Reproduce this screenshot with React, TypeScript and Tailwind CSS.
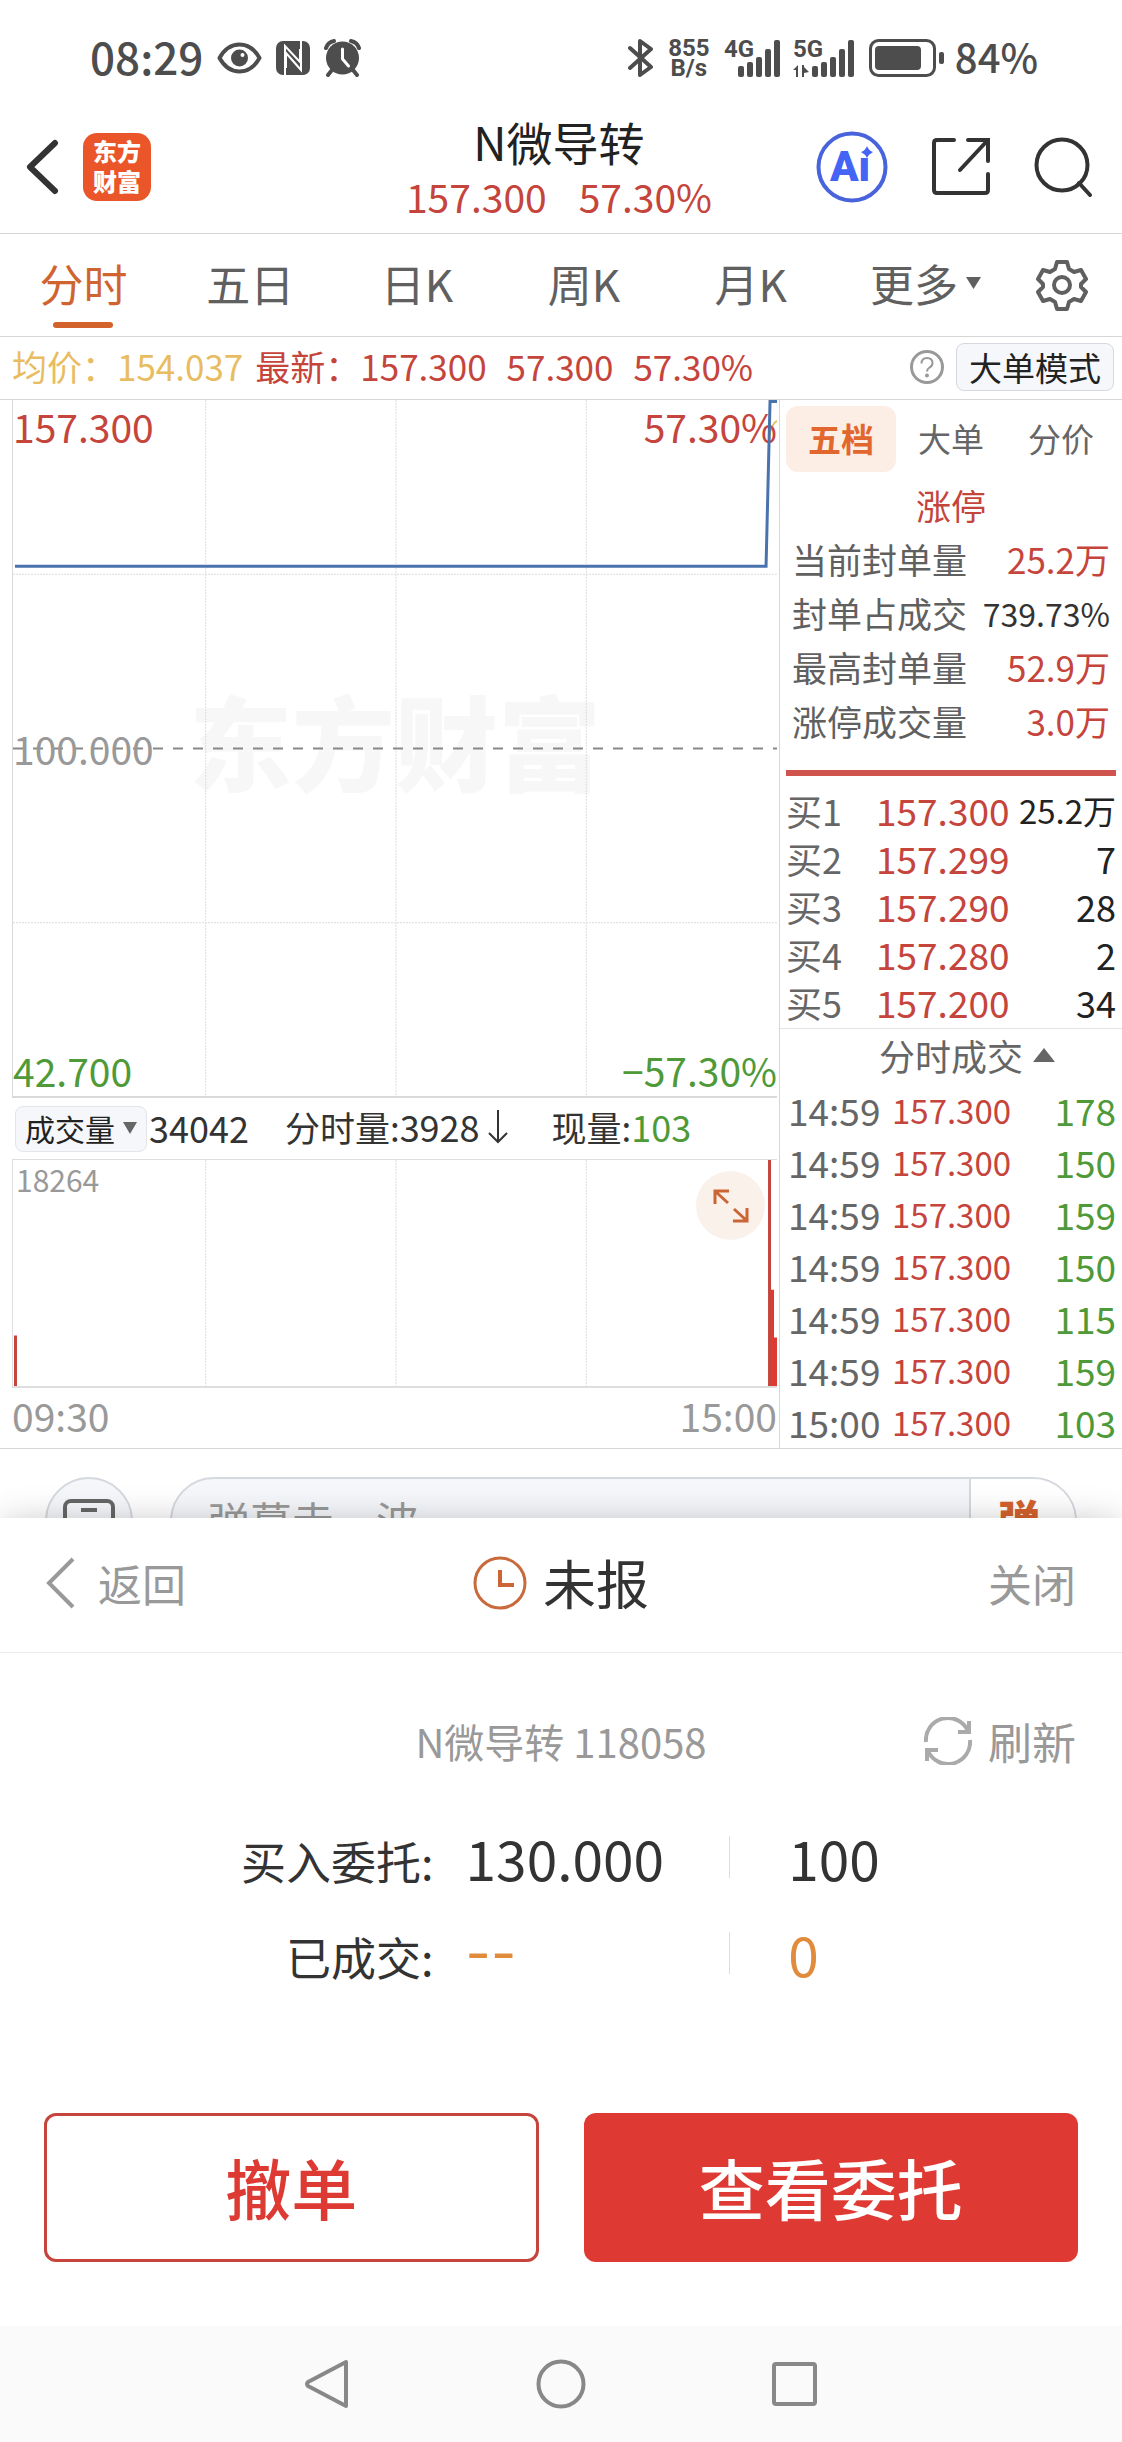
const tabs = ["分时", "五日", "日K", "周K", "月K"];

const sealStats = [
  { label: "当前封单量", value: "25.2万", red: true },
  { label: "封单占成交", value: "739.73%", red: false },
  { label: "最高封单量", value: "52.9万", red: true },
  { label: "涨停成交量", value: "3.0万", red: true },
];

const bids = [
  { level: "买1", price: "157.300", amount: "25.2万" },
  { level: "买2", price: "157.299", amount: "7" },
  { level: "买3", price: "157.290", amount: "28" },
  { level: "买4", price: "157.280", amount: "2" },
  { level: "买5", price: "157.200", amount: "34" },
];

const ticks = [
  { time: "14:59", price: "157.300", amount: "178" },
  { time: "14:59", price: "157.300", amount: "150" },
  { time: "14:59", price: "157.300", amount: "159" },
  { time: "14:59", price: "157.300", amount: "150" },
  { time: "14:59", price: "157.300", amount: "115" },
  { time: "14:59", price: "157.300", amount: "159" },
  { time: "15:00", price: "157.300", amount: "103" },
];

const signalHeights = [11, 15, 20, 28, 37];

const Signal = ({ label, arrows }: { label: string; arrows?: boolean }) => (
  <svg
    className="overflow-visible"
    width={arrows ? 61 : 56}
    height="38"
    viewBox={arrows ? "0 0 61 38" : "0 0 56 38"}
    fill="#4d4d4d"
    aria-hidden="true"
  >
    <text x="0" y="18" fontSize="24" fontWeight="700" fontFamily="Roboto, sans-serif">
      {label}
    </text>
    {arrows && <path d="M5 26v12H3v-7H0zM9 26h2v2l5 5-5 1v4H9z" />}
    {signalHeights.map((h, i) => (
      <rect key={h} x={(arrows ? 19 : 14) + i * 9} y={38 - h} width="6" height={h} rx="2" />
    ))}
  </svg>
);

const StatusBar = () => (
  <div className="flex h-[116px] items-center justify-between pr-[84px] pl-[90px] text-[#4d4d4d]">
    <div className="flex items-center gap-[14px]">
      <span className="pb-1 text-[44px] leading-none font-medium">08:29</span>
      <svg width="45" height="32" viewBox="0 0 45 32" aria-hidden="true">
        <path
          d="M2.500 16Q10 2.500 22.500 2.500T42.500 16Q35 29.500 22.500 29.500T2.500 16z"
          fill="none"
          stroke="#4d4d4d"
          strokeWidth="4"
          strokeLinejoin="round"
        />
        <circle cx="22.500" cy="16" r="8.500" fill="#4d4d4d" />
        <circle cx="25.500" cy="13" r="2" fill="#fff" />
      </svg>
      <svg width="34" height="34" viewBox="0 0 34 34" aria-hidden="true">
        <rect width="34" height="34" rx="7" fill="#4d4d4d" />
        <path d="M9 34V5L24 21V8M10 27V12L25 29V0" fill="none" stroke="#fff" strokeWidth="2" />
      </svg>
      <svg width="37" height="38" viewBox="0 0 37 38" aria-hidden="true">
        <g fill="none" stroke="#4d4d4d" strokeWidth="4" strokeLinecap="round">
          <path d="M2 9Q4 3 10 2M35 9Q33 3 27 2M8 31l-4 5M29 31l4 5" />
        </g>
        <circle cx="18.500" cy="19" r="16.500" fill="#4d4d4d" />
        <path
          d="M18.500 10v10l6 7"
          fill="none"
          stroke="#fff"
          strokeWidth="3"
          strokeLinecap="round"
        />
      </svg>
    </div>
    <div className="flex items-center gap-[13px]">
      <svg width="26" height="38" viewBox="0 0 26 38" aria-hidden="true">
        <path
          d="M2 9l21 19-11 8V2l11 8L2 29"
          fill="none"
          stroke="#4d4d4d"
          strokeWidth="4"
          strokeLinejoin="round"
          strokeLinecap="round"
        />
      </svg>
      <span className="flex w-[44px] flex-col items-center font-[Roboto,sans-serif] text-[24px] leading-[20px] font-bold">
        <span>855</span>
        <span>B/s</span>
      </span>
      <Signal label="4G" />
      <Signal label="5G" arrows />
      <div className="flex items-center gap-[10px] pl-[2px]">
        <svg width="76" height="38" viewBox="0 0 76 38" aria-hidden="true">
          <rect
            x="1.500"
            y="1.500"
            width="64"
            height="35"
            rx="8"
            fill="none"
            stroke="#4d4d4d"
            strokeWidth="3"
          />
          <rect x="6" y="7" width="46" height="24" rx="4" fill="#4d4d4d" />
          <rect x="70" y="13" width="5" height="12" rx="2" fill="#4d4d4d" />
        </svg>
        <span className="pb-1 text-[40px] leading-none font-medium">84%</span>
      </div>
    </div>
  </div>
);

const Header = () => (
  <header className="grid h-[118px] grid-cols-[1fr_auto_1fr] items-start border-b border-[#d6d6d6] pr-[30px] pl-[26px]">
    <div className="flex h-[102px] items-center gap-6">
      <button aria-label="返回上一页">
        <svg width="33" height="56" viewBox="0 0 33 56" aria-hidden="true">
          <path
            d="M29 4L4 28l25 24"
            fill="none"
            stroke="#333"
            strokeWidth="6"
            strokeLinecap="round"
            strokeLinejoin="round"
          />
        </svg>
      </button>
      <a
        href="#home"
        className="flex h-[68px] w-[68px] flex-col items-center justify-center rounded-[14px] bg-[#ea5529] pb-[2px] text-[24px] leading-[30px] font-black text-white"
      >
        <span>东方</span>
        <span>财富</span>
      </a>
    </div>
    <div className="flex flex-col items-center">
      <h1 className="text-[46px] leading-[50px] text-[#222]">N微导转</h1>
      <p className="flex gap-8 text-[39px] leading-[60px] text-[#c5443c]">
        <span>157.300</span>
        <span>57.30%</span>
      </p>
    </div>
    <div className="flex h-[102px] items-center justify-end gap-[44px]">
      <button aria-label="AI 助手">
        <svg width="72" height="72" viewBox="0 0 72 72" aria-hidden="true">
          <circle cx="36" cy="36" r="33.500" fill="none" stroke="#4863dc" strokeWidth="4" />
          <text
            x="14"
            y="50"
            fontSize="42"
            fontWeight="900"
            fontFamily="Roboto, sans-serif"
            fill="#4464f5"
          >
            Ai
          </text>
          <rect x="42" y="15" width="17" height="12" fill="#fff" />
          <path d="M51 15q2 5 6 6-4 2-6 6-2-4-6-6 4-1 6-6z" fill="#4464f5" />
        </svg>
      </button>
      <button aria-label="分享">
        <svg width="58" height="58" viewBox="0 0 58 58" aria-hidden="true">
          <path
            d="M22 2H5Q2 2 2 5v47q0 3 3 3h48q3 0 3-3V36M36 2h20v21M55 3L28 32"
            fill="none"
            stroke="#333"
            strokeWidth="4"
            strokeLinecap="round"
          />
        </svg>
      </button>
      <button aria-label="搜索">
        <svg width="58" height="60" viewBox="0 0 58 60" aria-hidden="true">
          <circle cx="28" cy="28" r="25.500" fill="none" stroke="#333" strokeWidth="4" />
          <path d="M45 46l11 12" stroke="#333" strokeWidth="4" strokeLinecap="round" />
        </svg>
      </button>
    </div>
  </header>
);

const PeriodTabs = () => (
  <nav className="flex h-[103px] border-b border-[#d6d6d6] text-[44px] text-[#606060]">
    <div className="grid flex-1 grid-cols-6">
      {tabs.map((tab, i) => (
        <button
          key={tab}
          className={
            i === 0
              ? "relative flex items-center justify-center pb-1 text-[#cf6431]"
              : "flex items-center justify-center pb-1"
          }
        >
          {tab}
          {i === 0 && (
            <span className="absolute bottom-2 h-[6px] w-[60px] rounded-full bg-[#d4622d]" />
          )}
        </button>
      ))}
      <button className="flex items-center justify-center gap-2 pb-1 pl-4">
        更多
        <svg width="15" height="12" viewBox="0 0 15 12" aria-hidden="true">
          <path d="M0 0h15L7.500 12z" fill="#606060" />
        </svg>
      </button>
    </div>
    <button aria-label="设置" className="flex w-[121px] items-center justify-center">
      <svg width="52" height="52" viewBox="0 0 52 52" aria-hidden="true">
        <path
          d="M21 3h10l2 7 5 3 7-2 5 9-5 5v3l5 5-5 9-7-2-5 3-2 7H21l-2-7-5-3-7 2-5-9 5-5v-3l-5-5 5-9 7 2 5-3z"
          fill="none"
          stroke="#606060"
          strokeWidth="4"
          strokeLinejoin="round"
        />
        <circle cx="26" cy="26" r="8" fill="none" stroke="#606060" strokeWidth="4" />
      </svg>
    </button>
  </nav>
);

const QuoteLine = () => (
  <div className="flex h-[63px] items-center justify-between border-b border-[#d6d6d6] pr-2 pb-1 pl-3 text-[35px] whitespace-nowrap">
    <div className="flex gap-3 text-[#c5443c]">
      <span className="text-[#e8bd62]">均价：154.037</span>
      <span>最新：157.300</span>
      <span className="pl-2">57.300</span>
      <span className="pl-2">57.30%</span>
    </div>
    <div className="flex items-center gap-3 pt-[2px]">
      <button aria-label="说明">
        <svg width="34" height="34" viewBox="0 0 34 34" aria-hidden="true">
          <circle cx="17" cy="17" r="15.500" fill="none" stroke="#999" strokeWidth="3" />
          <path
            d="M11.500 13.500q0-5.500 5.500-5.500t5.500 5q0 3-3 4.500-2.500 1.500-2.500 4"
            fill="none"
            stroke="#999"
            strokeWidth="2"
          />
          <circle cx="17" cy="25.500" r="2" fill="#999" />
        </svg>
      </button>
      <button className="h-[48px] rounded-lg border border-[#d5d8de] bg-[#f5f7fa] px-3 text-[33px] leading-[44px] text-[#222]">
        大单模式
      </button>
    </div>
  </div>
);

const PriceChart = () => (
  <div className="relative h-[698px] border-b-2 border-l border-[#d9d9d9] text-[39px] leading-[52px]">
    <span className="absolute inset-x-0 top-[290px] text-center text-[103px] leading-[100px] font-black text-[#f7f7f7]">
      东方财富
    </span>
    <svg
      className="absolute inset-0 h-full w-full"
      viewBox="0 0 767 697"
      preserveAspectRatio="none"
      aria-hidden="true"
    >
      <path
        d="M193.500 0V697M384.500 0V697M575.500 0V697M0 174.500H767M0 523.500H767"
        stroke="#dcdcdc"
        strokeDasharray="2 1"
        vectorEffect="non-scaling-stroke"
      />
      <path
        d="M0 349H767"
        stroke="#888"
        strokeWidth="2"
        strokeDasharray="10 10"
        vectorEffect="non-scaling-stroke"
      />
      <path d="M759 38Q761 24 767 21" fill="none" stroke="#e8bd62" strokeWidth="2" />
    </svg>
    <span className="absolute top-0 left-0 text-[#c5443c]">157.300</span>
    <span className="absolute top-0 right-0 text-[#c5443c]">57.30%</span>
    <span className="absolute top-[322px] left-0 text-[#999]">100.000</span>
    <span className="absolute bottom-0 left-0 text-[#4f9a38]">42.700</span>
    <span className="absolute right-0 bottom-0 text-[#4f9a38]">−57.30%</span>
    <svg
      className="absolute inset-0 h-full w-full"
      viewBox="0 0 767 697"
      preserveAspectRatio="none"
      aria-hidden="true"
    >
      <path
        d="M2 166.500H756L760 1.500H767"
        fill="none"
        stroke="#4a72ad"
        strokeWidth="3"
        vectorEffect="non-scaling-stroke"
      />
    </svg>
  </div>
);

const VolumeChart = () => (
  <>
    <div className="flex h-[61px] items-center text-[35px] whitespace-nowrap text-[#333]">
      <button className="ml-[3px] flex h-[46px] w-[132px] items-center justify-center gap-2 rounded-lg border border-[#e2e5ea] bg-[#f5f7fa] pb-[2px] text-[30px] leading-none text-[#222]">
        成交量
        <svg width="14" height="12" viewBox="0 0 14 12" aria-hidden="true">
          <path d="M0 0h14L7 12z" fill="#666" />
        </svg>
      </button>
      <span className="ml-[2px] pb-1 text-[36px]">34042</span>
      <span className="ml-9 flex items-center gap-2 pb-1">
        <span>
          分时量:<span className="text-[36px]">3928</span>
        </span>
        <svg width="20" height="34" viewBox="0 0 20 34" aria-hidden="true">
          <path d="M10 0v32M1 23l9 9 9-9" fill="none" stroke="#333" strokeWidth="2" />
        </svg>
      </span>
      <span className="ml-[44px] pb-1">
        现量:<span className="text-[36px] text-[#4f9a38]">103</span>
      </span>
    </div>
    <div className="relative h-[229px] border-t border-b-2 border-l border-[#dedede]">
      <svg
        className="absolute inset-0 h-full w-full"
        viewBox="0 0 767 228"
        preserveAspectRatio="none"
        aria-hidden="true"
      >
        <path
          d="M193.500 0V228M384.500 0V228M575.500 0V228"
          stroke="#dcdcdc"
          strokeDasharray="2 1"
          vectorEffect="non-scaling-stroke"
        />
        <path d="M1 177h3v51H1zM758 0h3v228h-3z" fill="#c5443c" />
        <path d="M761 131h3v97h-3zM764 179h3v49h-3z" fill="#dc3a32" />
      </svg>
      <span className="absolute top-0 left-[3px] text-[30px] leading-[38px] text-[#999]">
        18264
      </span>
      <button
        aria-label="全屏"
        className="absolute top-[11px] right-3 flex h-[69px] w-[69px] items-center justify-center rounded-full bg-[#fbf1eb]"
      >
        <svg width="36" height="34" viewBox="0 0 36 34" aria-hidden="true">
          <path
            d="M2 15V2h14M3 3l12 11M34 19v13H20M33 31L21 20"
            fill="none"
            stroke="#cc6535"
            strokeWidth="3"
          />
        </svg>
      </button>
    </div>
    <div className="flex h-[59px] items-center justify-between pb-1 text-[39px] text-[#999]">
      <span>09:30</span>
      <span>15:00</span>
    </div>
  </>
);

const OrderPanel = () => (
  <aside className="w-[343px] shrink-0 border-l border-[#d6d6d6] whitespace-nowrap">
    <div className="px-[6px] pt-[6px]">
      <div className="grid h-[66px] grid-cols-3 text-[33px] text-[#666]">
        <button className="rounded-xl bg-[#fcede5] font-bold text-[#e2672f]">五档</button>
        <button>大单</button>
        <button>分价</button>
      </div>
      <div className="mt-[6px] text-[35px] leading-[54px]">
        <p className="text-center text-[#c5443c]">涨停</p>
        <dl className="px-[6px]">
          {sealStats.map((item) => (
            <div key={item.label} className="flex justify-between">
              <dt className="text-[#606060]">{item.label}</dt>
              <dd className={item.red ? "text-[#c5443c]" : "text-[32px] text-[#333]"}>
                {item.value}
              </dd>
            </div>
          ))}
        </dl>
      </div>
      <div className="mt-[22px] h-[6px] bg-[#cf544d]" />
      <table className="mt-[10px] w-full table-fixed text-[36px] leading-[48px]">
        <tbody>
          {bids.map((bid) => (
            <tr key={bid.level}>
              <th scope="row" className="w-[90px] p-0 text-left font-normal text-[#666]">
                {bid.level}
              </th>
              <td className="w-[134px] p-0 text-[37px] text-[#c5443c]">{bid.price}</td>
              <td
                className={
                  bid.amount.endsWith("万")
                    ? "p-0 text-right text-[33px] text-[#222]"
                    : "p-0 text-right text-[#222]"
                }
              >
                {bid.amount}
              </td>
            </tr>
          ))}
        </tbody>
      </table>
    </div>
    <button className="mt-[2px] flex h-[56px] w-full items-center justify-center gap-[10px] border-t border-[#e3e3e3] pb-1 pl-8 text-[36px] text-[#666]">
      分时成交
      <svg width="22" height="14" viewBox="0 0 22 14" aria-hidden="true">
        <path d="M11 0l11 14H0z" fill="#666" />
      </svg>
    </button>
    <div className="pr-[6px] pl-2">
      <table className="w-full table-fixed text-[37px] leading-[52px]">
        <tbody>
          {ticks.map((tick, i) => (
            <tr key={i}>
              <td className="w-[104px] p-0 text-[#666]">{tick.time}</td>
              <td className="w-[134px] p-0 text-[33px] text-[#c5443c]">{tick.price}</td>
              <td className="p-0 text-right text-[#4f9a38]">{tick.amount}</td>
            </tr>
          ))}
        </tbody>
      </table>
    </div>
  </aside>
);

const DanmakuBar = () => (
  <div className="flex h-[69px] gap-[37px] overflow-hidden px-[45px] pt-7">
    <button
      aria-label="键盘"
      className="flex h-[88px] w-[88px] shrink-0 justify-center rounded-full border-2 border-[#d5d8de] bg-[#f5f7fa] pt-5"
    >
      <svg width="52" height="46" viewBox="0 0 52 46" aria-hidden="true">
        <rect
          x="2"
          y="2"
          width="48"
          height="42"
          rx="6"
          fill="none"
          stroke="#666"
          strokeWidth="4"
        />
        <path d="M18 11h16" stroke="#666" strokeWidth="4" />
      </svg>
    </button>
    <div className="flex h-[88px] flex-1 overflow-hidden rounded-full border-2 border-[#d5d8de] bg-[#f5f7fa]">
      <input
        aria-label="弹幕"
        placeholder="弹幕走一波"
        className="min-w-0 flex-1 pb-1 pl-9 text-[42px] placeholder:text-[#999]"
      />
      <button className="w-[106px] border-l-2 border-[#d5d8de] bg-white pr-2 pb-2 text-[42px] font-black text-[#d4622d]">
        弹
      </button>
    </div>
  </div>
);

const OrderSheet = () => (
  <section className="relative bg-white shadow-[0_4px_36px_-4px_rgba(0,0,0,0.3)]">
    <div className="grid h-[135px] grid-cols-[1fr_auto_1fr] items-center border-b border-[#ececec] px-[46px] pb-1 text-[44px] text-[#999]">
      <button className="flex items-center gap-[22px] justify-self-start">
        <svg width="30" height="52" viewBox="0 0 30 52" aria-hidden="true">
          <path d="M27 2L3 26l24 24" fill="none" stroke="#999" strokeWidth="4" />
        </svg>
        返回
      </button>
      <h2 className="flex items-center gap-4 text-[53px] text-[#333]">
        <svg width="54" height="54" viewBox="0 0 54 54" aria-hidden="true">
          <circle cx="27" cy="27" r="25" fill="none" stroke="#c96a3c" strokeWidth="3" />
          <path d="M27 14v15h14" fill="none" stroke="#cc6535" strokeWidth="4" />
        </svg>
        未报
      </h2>
      <button className="justify-self-end">关闭</button>
    </div>
    <div className="mt-[58px] grid h-[60px] grid-cols-[1fr_auto_1fr] items-center px-[46px] text-[#999]">
      <p className="col-start-2 text-[40px]">N微导转 118058</p>
      <button className="flex items-center gap-4 justify-self-end text-[44px] leading-none">
        <svg width="48" height="48" viewBox="0 0 48 48" aria-hidden="true">
          <g fill="none" stroke="#aaa" strokeWidth="4">
            <path d="M2 25A22 22 0 0 1 44 14M46 23A22 22 0 0 1 4 34" />
            <path d="M45 4v11H34M3 44V33h11" />
          </g>
        </svg>
        刷新
      </button>
    </div>
    <dl className="mt-[42px] text-[55px] text-[#333]">
      <div className="flex h-24 items-center">
        <dt className="w-[39%] pr-1 text-right text-[45px]">买入委托:</dt>
        <dd className="w-[26%] pb-2 pl-7">130.000</dd>
        <dd className="flex items-center gap-[58px] pb-2">
          <span className="h-[42px] w-px bg-[#ddd]" />
          100
        </dd>
      </div>
      <div className="flex h-24 items-center">
        <dt className="w-[39%] pr-1 text-right text-[45px]">已成交:</dt>
        <dd className="w-[26%] pb-2 pl-7 font-[Inter,sans-serif] text-[#e08c3c]">--</dd>
        <dd className="flex items-center gap-[58px] pb-2 text-[#e08c3c]">
          <span className="h-[42px] w-px bg-[#ddd]" />0
        </dd>
      </div>
    </dl>
    <div className="mt-[108px] grid grid-cols-2 gap-[45px] px-[44px] pb-16 text-[66px] font-medium">
      <button className="h-[149px] rounded-xl border-3 border-[#c5443c] pb-1 leading-none text-[#dc3a32]">
        撤单
      </button>
      <button className="h-[149px] rounded-xl bg-[#de3933] pb-1 leading-none text-white">
        查看委托
      </button>
    </div>
  </section>
);

const SystemNav = () => (
  <nav className="relative flex h-[117px] items-center justify-center gap-[184px] bg-[#fafafa] pb-[2px]">
    <button aria-label="系统返回">
      <svg width="50" height="50" viewBox="0 0 50 50" aria-hidden="true">
        <path
          d="M44 3v44L6 27q-2-2 0-4z"
          fill="none"
          stroke="#888"
          strokeWidth="4"
          strokeLinejoin="round"
        />
      </svg>
    </button>
    <button aria-label="主屏幕">
      <svg width="50" height="50" viewBox="0 0 50 50" aria-hidden="true">
        <circle cx="25" cy="25" r="22.500" fill="none" stroke="#888" strokeWidth="4" />
      </svg>
    </button>
    <button aria-label="最近任务">
      <svg width="50" height="50" viewBox="0 0 50 50" aria-hidden="true">
        <rect
          x="4"
          y="5"
          width="41"
          height="40"
          rx="2"
          fill="none"
          stroke="#888"
          strokeWidth="4"
        />
      </svg>
    </button>
  </nav>
);

const App = () => {
  return (
    <main className="bg-white font-['Noto_Sans_CJK_SC',sans-serif]">
      <StatusBar />
      <Header />
      <PeriodTabs />
      <QuoteLine />
      <div className="flex border-b border-[#d6d6d6]">
        <div className="min-w-0 flex-1 pr-[2px] pl-3">
          <PriceChart />
          <VolumeChart />
        </div>
        <OrderPanel />
      </div>
      <DanmakuBar />
      <OrderSheet />
      <SystemNav />
    </main>
  );
};

export default App;
